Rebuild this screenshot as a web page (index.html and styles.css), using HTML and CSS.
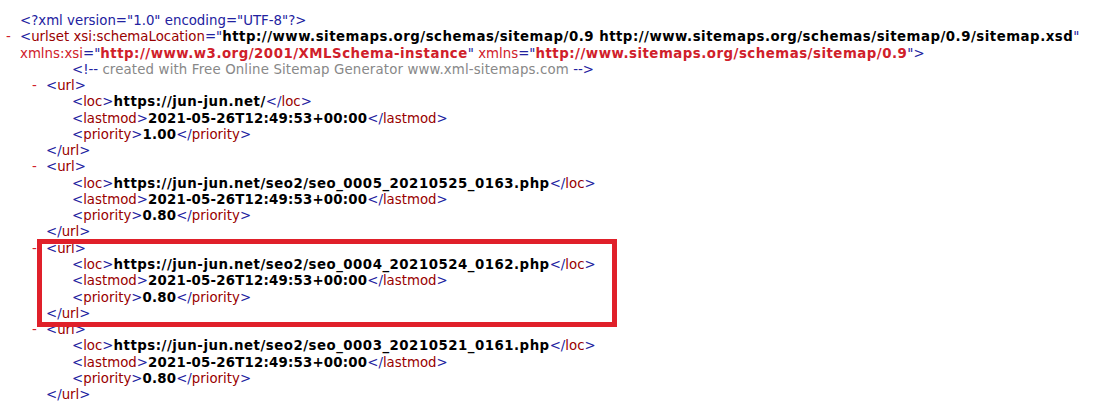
FILE: index.html
```html
<!DOCTYPE html>
<html>
<head>
<meta charset="utf-8">
<link rel="stylesheet" href="styles.css">
</head>
<body>
<div class="doc">
  <div class="ln i0"><span class="m">&lt;?xml version="1.0" encoding="UTF-8"?&gt;</span></div>
  <div class="ln i0"><span class="exp">-</span><span class="m">&lt;</span><span class="t">urlset xsi:schemaLocation</span><span class="m">="</span><b class="v">http://www.sitemaps.org/schemas/sitemap/0.9 http://www.sitemaps.org/schemas/sitemap/0.9/sitemap.xsd</b><span class="m">"</span></div>
  <div class="ln i0"><span class="ns">xmlns:xsi</span><span class="m">="</span><b class="ns v">http://www.w3.org/2001/XMLSchema-instance</b><span class="m">"</span> <span class="ns">xmlns</span><span class="m">="</span><b class="ns v">http://www.sitemaps.org/schemas/sitemap/0.9</b><span class="m">"&gt;</span></div>
  <div class="ln i2"><span class="m">&lt;!--</span> <span class="c">created with Free Online Sitemap Generator www.xml-sitemaps.com</span> <span class="m">--&gt;</span></div>

  <div class="ln i1"><span class="exp">-</span><span class="m">&lt;</span><span class="t">url</span><span class="m">&gt;</span></div>
  <div class="ln i2"><span class="m">&lt;</span><span class="t">loc</span><span class="m">&gt;</span><b class="v">https://jun-jun.net/</b><span class="m">&lt;/</span><span class="t">loc</span><span class="m">&gt;</span></div>
  <div class="ln i2"><span class="m">&lt;</span><span class="t">lastmod</span><span class="m">&gt;</span><b class="d">2021-05-26T12:49:53+00:00</b><span class="m">&lt;/</span><span class="t">lastmod</span><span class="m">&gt;</span></div>
  <div class="ln i2"><span class="m">&lt;</span><span class="t">priority</span><span class="m">&gt;</span><b class="d">1.00</b><span class="m">&lt;/</span><span class="t">priority</span><span class="m">&gt;</span></div>
  <div class="ln i1"><span class="m">&lt;/</span><span class="t">url</span><span class="m">&gt;</span></div>

  <div class="ln i1"><span class="exp">-</span><span class="m">&lt;</span><span class="t">url</span><span class="m">&gt;</span></div>
  <div class="ln i2"><span class="m">&lt;</span><span class="t">loc</span><span class="m">&gt;</span><b class="v">https://jun-jun.net/seo2/seo_0005_20210525_0163.php</b><span class="m">&lt;/</span><span class="t">loc</span><span class="m">&gt;</span></div>
  <div class="ln i2"><span class="m">&lt;</span><span class="t">lastmod</span><span class="m">&gt;</span><b class="d">2021-05-26T12:49:53+00:00</b><span class="m">&lt;/</span><span class="t">lastmod</span><span class="m">&gt;</span></div>
  <div class="ln i2"><span class="m">&lt;</span><span class="t">priority</span><span class="m">&gt;</span><b class="d">0.80</b><span class="m">&lt;/</span><span class="t">priority</span><span class="m">&gt;</span></div>
  <div class="ln i1"><span class="m">&lt;/</span><span class="t">url</span><span class="m">&gt;</span></div>

  <div class="marked">
    <div class="ln i1"><span class="exp">-</span><span class="m">&lt;</span><span class="t">url</span><span class="m">&gt;</span></div>
    <div class="ln i2"><span class="m">&lt;</span><span class="t">loc</span><span class="m">&gt;</span><b class="v">https://jun-jun.net/seo2/seo_0004_20210524_0162.php</b><span class="m">&lt;/</span><span class="t">loc</span><span class="m">&gt;</span></div>
    <div class="ln i2"><span class="m">&lt;</span><span class="t">lastmod</span><span class="m">&gt;</span><b class="d">2021-05-26T12:49:53+00:00</b><span class="m">&lt;/</span><span class="t">lastmod</span><span class="m">&gt;</span></div>
    <div class="ln i2"><span class="m">&lt;</span><span class="t">priority</span><span class="m">&gt;</span><b class="d">0.80</b><span class="m">&lt;/</span><span class="t">priority</span><span class="m">&gt;</span></div>
    <div class="ln i1"><span class="m">&lt;/</span><span class="t">url</span><span class="m">&gt;</span></div>
  </div>

  <div class="ln i1"><span class="exp">-</span><span class="m">&lt;</span><span class="t">url</span><span class="m">&gt;</span></div>
  <div class="ln i2"><span class="m">&lt;</span><span class="t">loc</span><span class="m">&gt;</span><b class="v">https://jun-jun.net/seo2/seo_0003_20210521_0161.php</b><span class="m">&lt;/</span><span class="t">loc</span><span class="m">&gt;</span></div>
  <div class="ln i2"><span class="m">&lt;</span><span class="t">lastmod</span><span class="m">&gt;</span><b class="d">2021-05-26T12:49:53+00:00</b><span class="m">&lt;/</span><span class="t">lastmod</span><span class="m">&gt;</span></div>
  <div class="ln i2"><span class="m">&lt;</span><span class="t">priority</span><span class="m">&gt;</span><b class="d">0.80</b><span class="m">&lt;/</span><span class="t">priority</span><span class="m">&gt;</span></div>
  <div class="ln i1"><span class="m">&lt;/</span><span class="t">url</span><span class="m">&gt;</span></div>
</div>
</body>
</html>
```
FILE: styles.css
```css
html, body {
  margin: 0;
  background: #ffffff;
}
.doc {
  padding-top: 13px;
  font-family: "DejaVu Sans", Verdana, sans-serif;
  font-size: 13.33px;
  line-height: 16.26px;
  color: #000000;
  white-space: nowrap;
  overflow: hidden;
}
.ln { display: block; }
.i0 { padding-left: 20px; }
.i1 { padding-left: 46px; }
.i2 { padding-left: 72px; }
.exp {
  display: inline-block;
  width: 14px;
  margin-left: -14px;
  color: #d0202a;
}
.m { color: #2222a0; }
.t { color: #990000; }
.ns { color: #d0202a; }
b { font-weight: bold; }
.v { letter-spacing: 0.5px; }
.d { letter-spacing: 0.2px; }
.c { color: #888888; letter-spacing: 0.15px; }
.marked { position: relative; }
.marked::after {
  content: "";
  position: absolute;
  left: 37px;
  top: -2px;
  width: 570px;
  height: 78px;
  border: 5px solid #e0202a;
  pointer-events: none;
}
```
